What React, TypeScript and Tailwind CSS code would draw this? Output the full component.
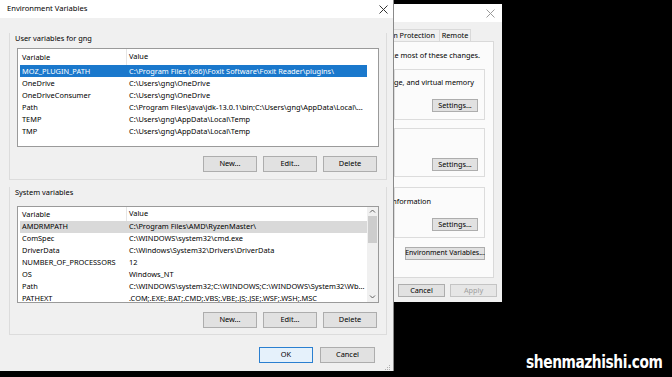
import React from "react";

const userVars: [string, string][] = [
  ["MOZ_PLUGIN_PATH", "C:\\Program Files (x86)\\Foxit Software\\Foxit Reader\\plugins\\"],
  ["OneDrive", "C:\\Users\\gng\\OneDrive"],
  ["OneDriveConsumer", "C:\\Users\\gng\\OneDrive"],
  ["Path", "C:\\Program Files\\Java\\jdk-13.0.1\\bin;C:\\Users\\gng\\AppData\\Local\\..."],
  ["TEMP", "C:\\Users\\gng\\AppData\\Local\\Temp"],
  ["TMP", "C:\\Users\\gng\\AppData\\Local\\Temp"],
];

const systemVars: [string, string][] = [
  ["AMDRMPATH", "C:\\Program Files\\AMD\\RyzenMaster\\"],
  ["ComSpec", "C:\\WINDOWS\\system32\\cmd.exe"],
  ["DriverData", "C:\\Windows\\System32\\Drivers\\DriverData"],
  ["NUMBER_OF_PROCESSORS", "12"],
  ["OS", "Windows_NT"],
  ["Path", "C:\\WINDOWS\\system32;C:\\WINDOWS;C:\\WINDOWS\\System32\\Wb..."],
  ["PATHEXT", ".COM;.EXE;.BAT;.CMD;.VBS;.VBE;.JS;.JSE;.WSF;.WSH;.MSC"],
];

function WinButton({ label, className = "", disabled = false }: { label: string; className?: string; disabled?: boolean }) {
  return (
    <div
      className={`flex items-center justify-center border ${disabled ? "text-[#a0a0a0] border-[#c4c4c4] bg-[#e6e6e6]" : "text-black border-[#adadad] bg-[#e1e1e1]"} ${className}`}
    >
      {label}
    </div>
  );
}

function CloseX({ color }: { color: string }) {
  return (
    <svg width="9" height="9" viewBox="0 0 9 9">
      <path d="M0.5 0.5 L8.5 8.5 M8.5 0.5 L0.5 8.5" stroke={color} strokeWidth="1" />
    </svg>
  );
}

function VarRow({ name, value, rowClass, selected }: { name: string; value: string; rowClass: string; selected?: "blue" | "gray" }) {
  const bg = selected === "blue" ? "bg-[#1a78cc] text-white" : selected === "gray" ? "bg-[#d9d9d9]" : "";
  return (
    <div className={`ml-[2px] flex items-center whitespace-nowrap ${rowClass} ${bg}`}>
      <div className="w-[107px] shrink-0 pl-[2px]">{name}</div>
      <div className="pl-[2px]">{value}</div>
    </div>
  );
}

function EnvDialog() {
  return (
    <div className="absolute left-0 top-0 z-10 flex h-[371px] w-[394px] flex-col border-r border-[#8a8a8a] bg-[#f0f0f0] text-[7.4px] text-black">
      {/* title bar */}
      <div className="flex h-[18px] shrink-0 items-center justify-between bg-white pl-[7px] pr-[5px] text-[7.6px]">
        <span>Environment Variables</span>
        <CloseX color="#333" />
      </div>

      {/* user variables */}
      <div className="ml-[9px] mr-[6px] mt-[15px] border-x border-b border-[#dcdcdc] px-[7px] pb-[7px]">
        <div className="-ml-[2px] h-[10px] leading-[10px]">User variables for gng</div>
        <div className="mt-[5px] h-[99px] border border-[#9a9a9a] bg-white">
          <div className="flex h-[16px] items-center whitespace-nowrap">
            <div className="w-[109px] border-r border-[#e5e5e5] pl-[4px] leading-[16px]">Variable</div>
            <div className="pl-[2px]">Value</div>
          </div>
          <div className="mr-[11px]">
            {userVars.map(([n, v], i) => (
              <VarRow key={n} name={n} value={v} rowClass="h-[12.2px]" selected={i === 0 ? "blue" : undefined} />
            ))}
          </div>
        </div>
        <div className="mt-[9px] flex justify-end gap-[6px] pr-[2px]">
          <WinButton label="New..." className="h-[16px] w-[54px]" />
          <WinButton label="Edit..." className="h-[16px] w-[54px]" />
          <WinButton label="Delete" className="h-[16px] w-[54px]" />
        </div>
      </div>

      {/* system variables */}
      <div className="ml-[9px] mr-[6px] mt-[7px] border-x border-b border-[#dcdcdc] px-[7px] pb-[6px]">
        <div className="-ml-[2px] h-[10px] leading-[10px]">System variables</div>
        <div className="mt-[9px] flex h-[97px] border border-[#9a9a9a] bg-white">
          <div className="flex-1 overflow-hidden">
            <div className="flex h-[14px] items-center whitespace-nowrap">
              <div className="w-[109px] border-r border-[#e5e5e5] pl-[4px] leading-[14px]">Variable</div>
              <div className="pl-[2px]">Value</div>
            </div>
            {systemVars.map(([n, v], i) => (
              <VarRow key={n} name={n} value={v} rowClass="h-[12px]" selected={i === 0 ? "gray" : undefined} />
            ))}
          </div>
          {/* scrollbar */}
          <div className="flex w-[11px] flex-col items-center bg-[#f0f0f0]">
            <svg width="7" height="7" viewBox="0 0 7 7" className="mt-[1px]">
              <path d="M1 4.5 L3.5 2 L6 4.5" stroke="#606060" strokeWidth="1" fill="none" />
            </svg>
            <div className="mt-[1px] h-[27px] w-[9px] bg-[#cdcdcd]" />
            <div className="flex-1" />
            <svg width="7" height="7" viewBox="0 0 7 7" className="mb-[2px]">
              <path d="M1 2.5 L3.5 5 L6 2.5" stroke="#606060" strokeWidth="1" fill="none" />
            </svg>
          </div>
        </div>
        <div className="mt-[9px] flex justify-end gap-[6px] pr-[2px]">
          <WinButton label="New..." className="h-[16px] w-[54px]" />
          <WinButton label="Edit..." className="h-[16px] w-[54px]" />
          <WinButton label="Delete" className="h-[16px] w-[54px]" />
        </div>
      </div>

      {/* ok / cancel */}
      <div className="mt-[12px] flex justify-end gap-[7px] pr-[18px]">
        <div className="flex h-[16px] w-[54px] items-center justify-center border border-[#2a7fd0] bg-[#e5f1fb]">OK</div>
        <WinButton label="Cancel" className="h-[16px] w-[55px]" />
      </div>
      <div className="flex flex-1 items-end justify-end pb-[2px] pr-[2px]">
        <svg width="8" height="8" viewBox="0 0 8 8">
          <rect x="6" y="2" width="1" height="1" fill="#b0b0b0" />
          <rect x="4" y="4" width="1" height="1" fill="#b0b0b0" />
          <rect x="6" y="4" width="1" height="1" fill="#b0b0b0" />
          <rect x="2" y="6" width="1" height="1" fill="#b0b0b0" />
          <rect x="4" y="6" width="1" height="1" fill="#b0b0b0" />
          <rect x="6" y="6" width="1" height="1" fill="#b0b0b0" />
        </svg>
      </div>
    </div>
  );
}

function SysPropsDialog() {
  return (
    <div className="absolute left-[393px] top-[4px] flex h-[298px] w-[109px] flex-col overflow-hidden bg-[#f0f0f0] text-[7.3px] text-black">
      <div className="flex h-[18px] shrink-0 items-center justify-end bg-white pr-[7px]">
        <CloseX color="#9a9a9a" />
      </div>
      {/* tabs */}
      <div className="mt-[7px] flex h-[12px] shrink-0 items-stretch justify-end whitespace-nowrap pr-[31px]">
        <div className="flex items-center border-l border-t border-[#d9d9d9] px-[3px]">Advanced</div>
        <div className="flex items-center border-l border-t border-[#d9d9d9] px-[4px]">System Protection</div>
        <div className="flex w-[32px] shrink-0 items-center justify-center border-x border-t border-[#d9d9d9]">Remote</div>
      </div>
      {/* tab page */}
      <div className="mr-[8px] flex h-[237px] shrink-0 flex-col border border-[#d9d9d9] bg-[#fbfbfb] pr-[8px]">
        <div className="mt-[8px] flex h-[10px] items-center justify-end whitespace-nowrap pr-[5px]">
          <span className="shrink-0">You must be logged on as an Administrator to make most of these changes.</span>
        </div>
        <div className="mt-[9px] flex h-[51px] flex-col border border-[#dcdcdc] pr-[6px]">
          <div className="mt-[7px] flex h-[10px] items-center justify-end whitespace-nowrap pr-[4px]">
            <span className="shrink-0">Visual effects, processor scheduling, memory usage, and virtual memory</span>
          </div>
          <div className="mt-[12px] flex justify-end">
            <WinButton label="Settings..." className="h-[13px] w-[46px]" />
          </div>
        </div>
        <div className="mt-[8px] flex h-[49px] flex-col border border-[#dcdcdc] pr-[6px]">
          <div className="mt-[29px] flex justify-end">
            <WinButton label="Settings..." className="h-[13px] w-[46px]" />
          </div>
        </div>
        <div className="mt-[10px] flex h-[51px] flex-col border border-[#dcdcdc] pr-[6px]">
          <div className="mt-[8px] flex h-[10px] items-center justify-end whitespace-nowrap pr-[47px]">
            <span className="shrink-0">System startup, system failure, and debugging information</span>
          </div>
          <div className="mt-[12px] flex justify-end">
            <WinButton label="Settings..." className="h-[13px] w-[46px]" />
          </div>
        </div>
        <div className="mt-[9px] flex justify-end">
          <WinButton label="Environment Variables..." className="h-[13px] w-[80px] whitespace-nowrap text-[7px]" />
        </div>
      </div>
      <div className="mt-[6px] flex justify-end gap-[5px] pr-[5px]">
        <WinButton label="OK" className="h-[13px] w-[47px] shrink-0" />
        <WinButton label="Cancel" className="h-[13px] w-[47px] shrink-0" />
        <WinButton label="Apply" disabled className="h-[13px] w-[47px] shrink-0" />
      </div>
    </div>
  );
}

export default function App() {
  return (
    <div
      className="relative h-[377px] w-[672px] overflow-hidden bg-black"
      style={{ fontFamily: '"Noto Sans", "Open Sans", sans-serif' }}
    >
      <SysPropsDialog />
      <EnvDialog />
      {/* watermark */}
      <div
        className="absolute bottom-[6px] right-[10px] z-20 origin-bottom-right scale-x-[0.85] text-[18px] font-bold leading-none tracking-[-0.5px] text-white"
        style={{ fontFamily: '"DejaVu Sans Condensed", "Liberation Sans Narrow", sans-serif' }}
      >
        shenmazhishi.com
      </div>
    </div>
  );
}
